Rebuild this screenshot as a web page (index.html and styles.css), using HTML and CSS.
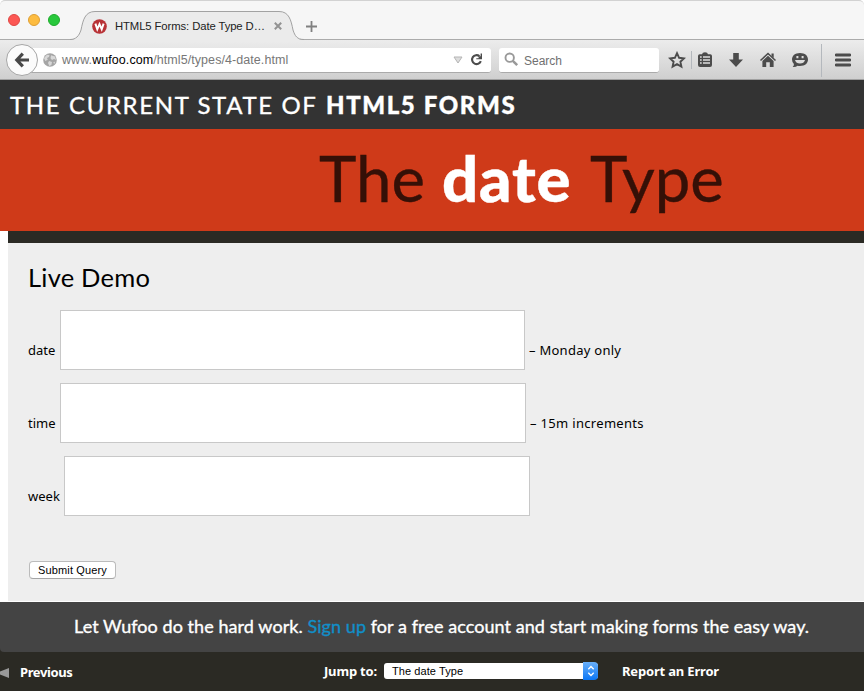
FILE: index.html
```html
<!DOCTYPE html>
<html lang="en">
<head>
<meta charset="utf-8">
<title>HTML5 Forms: Date Type Demo</title>
<link rel="stylesheet" href="styles.css">
</head>
<body>
<div class="window">
  <div class="tabbar">
    <div class="lights"><i class="red"></i><i class="amber"></i><i class="green"></i></div>
    <div class="tab">
      <svg class="tab-shape" width="232" height="30" viewBox="0 0 232 30">
        <path class="tab-fill" d="M0 29C6 29 9 25 11 19C13 9 15 .5 25 .5H209C219 .5 221 9 223 19C225 25 227 29 234 29V30H0Z"/>
        <path class="tab-line" d="M0 28.5C6 28.5 9 25 11 19C13 9 15 .5 25 .5H209C219 .5 221 9 223 19C225 25 227 28.5 234 28.5"/>
      </svg>
      <svg class="favicon" width="15" height="15" viewBox="0 0 15 15">
        <circle cx="7.5" cy="7.5" r="7.3" fill="#b83236"/>
        <path d="M3.4 4.6L5.3 10.2L7.5 5.2L9.7 10.2L11.6 4.6" fill="none" stroke="#fff" stroke-width="2"/>
      </svg>
      <span class="tab-title">HTML5 Forms: Date Type D…</span>
      <svg class="tab-close" width="8" height="8" viewBox="0 0 8 8"><path d="M.8.8L7.2 7.2M7.2.8L.8 7.2" stroke="#929292" stroke-width="2"/></svg>
    </div>
    <svg class="newtab" width="11" height="11" viewBox="0 0 11 11"><path d="M5.5 0V11M0 5.5H11" stroke="#808080" stroke-width="1.8"/></svg>
  </div>
  <div class="navbar">
    <div class="back">
      <svg width="16" height="16" viewBox="0 0 16 16"><path d="M8.8 1.6L2.8 8L8.8 14.4M3 8H15" fill="none" stroke="#484848" stroke-width="3.2"/></svg>
    </div>
    <div class="url">
      <svg class="globe" width="14" height="14" viewBox="0 0 14 14">
        <circle cx="7" cy="7" r="6.8" fill="#a5a5a5"/>
        <path d="M1 5L4 1.8L6.5 2L6 4L4 5L4.8 6.7L2.2 8ZM8 2.2L12 3.5L13 7L11 6L9 7L7.5 5.2ZM6 8L9 9L8.4 12L6.3 13L5 10ZM10.2 9.5L12.2 8.5L11.3 11Z" fill="#d8d8d8"/>
      </svg>
      <span class="address">www.<b>wufoo.com</b>/html5/types/4-date.html</span>
      <svg class="drop" width="10" height="8" viewBox="0 0 10 8"><path d="M1 1H9L5 7Z" fill="#ddd" stroke="#b5b5b5"/></svg>
      <svg class="reload" width="13" height="13" viewBox="0 0 13 13"><path d="M9.4 3.1A4.5 4.5 0 1 0 10.8 8.2" fill="none" stroke="#4c4c4c" stroke-width="2.1"/><path d="M12 .6V6.3H6.3V5.3H8.6V3.2H10.6V.6Z" fill="#4c4c4c"/></svg>
    </div>
    <div class="search">
      <svg width="15" height="15" viewBox="0 0 15 15"><circle cx="5.7" cy="5.7" r="4.2" fill="none" stroke="#999" stroke-width="1.9"/><path d="M8.8 8.8L13.2 13.2" stroke="#999" stroke-width="2.5"/></svg>
      <span>Search</span>
    </div>
    <div class="tools">
      <svg width="18" height="18" viewBox="0 0 18 18"><path d="M9 2.2L11.1 6.8L16 7.4L12.4 10.7L13.4 15.7L9 13.2L4.6 15.7L5.6 10.7L2 7.4L6.9 6.8Z" fill="none" stroke="#4c4c4c" stroke-width="1.9"/></svg>
      <i class="sep short"></i>
      <svg width="16" height="18" viewBox="0 0 16 18"><path d="M2.7 3.2H5Q5.4 1.2 8 1.2T11 3.2H13.3Q15 3.2 15 5V14Q15 16 13 16H3Q1 16 1 14V5Q1 3.2 2.7 3.2Z" fill="#4c4c4c"/><path d="M3 6H4.7M6 6H13M3 9H4.7M6 9H13M3 12H4.7M6 12H13" stroke="#ddd" stroke-width="1.7"/></svg>
      <svg class="gap-a" width="16" height="18" viewBox="0 0 16 18"><path d="M5.2 2H10.8V8.5H15L8 16L1 8.5H5.2Z" fill="#4c4c4c"/></svg>
      <svg class="gap-b" width="18" height="18" viewBox="0 0 18 18"><path d="M1.5 9.5L9 2.5L16.5 9.5" fill="none" stroke="#4c4c4c" stroke-width="1.6"/><path d="M12.5 2.5H14.7V7L12.5 5ZM3.4 10L9 4.8L14.6 10V16H10.8V11.3H7.2V16H3.4Z" fill="#4c4c4c"/></svg>
      <svg class="gap-c" width="18" height="18" viewBox="0 0 18 18"><path d="M9 2C14 2 17 4.8 17 8.5S14 15 9 15Q7.6 15 6.5 14.7Q4.8 16.4 1.7 16Q3.2 14.6 2.9 13Q1 11.2 1 8.5C1 4.8 4 2 9 2Z" fill="#4c4c4c"/><path d="M4 9H14Q13 12.6 9 12.6T4 9Z" fill="#ddd"/><path d="M6.4 5V7.3M11.6 5V7.3" stroke="#ddd" stroke-width="2"/></svg>
      <i class="sep tall"></i>
      <svg width="16" height="14" viewBox="0 0 16 14"><path d="M1 2H15M1 7H15M1 12H15" stroke="#4c4c4c" stroke-width="2.8" stroke-linecap="round"/></svg>
    </div>
  </div>

  <header class="masthead"><span>The current state of</span> <strong>HTML5 Forms</strong></header>
  <div class="hero"><h1><span class="w1">The</span><strong>date</strong><span class="w3">Type</span></h1></div>

  <main class="demo">
    <h2>Live Demo</h2>
    <div class="row"><label class="l-date">date</label><input class="short-in"><span class="note">– Monday only</span></div>
    <div class="row"><label class="l-time">time</label><input><span class="note n-time">– 15m increments</span></div>
    <div class="row"><label class="l-week">week</label><input></div>
    <button class="submit">Submit Query</button>
  </main>

  <div class="promo"><span>Let Wufoo do the hard work. <a>Sign up</a> for a free account and start making forms the easy way.</span></div>
  <footer class="footer">
    <i class="prev-arrow"></i>
    <span class="previous">Previous</span>
    <span class="jump">Jump to:</span>
    <div class="select"><span>The date Type</span>
      <i><svg width="8" height="12" viewBox="0 0 8 12"><path d="M1.3 4.2L4 1.5L6.7 4.2M1.3 7.8L4 10.5L6.7 7.8" fill="none" stroke="#fff" stroke-width="1.4"/></svg></i>
    </div>
    <span class="report">Report an Error</span>
  </footer>
</div>
</body>
</html>
```
FILE: styles.css
```css
* { box-sizing: border-box; }
body { margin: 0; background: #fff; font-family: "Noto Sans", sans-serif; }
.window { width: 864px; height: 691px; overflow: hidden; display: flex; flex-direction: column; }
.window > * { flex: none; }
svg { display: block; flex: none; }

.tabbar { height: 40px; display: flex; background: #f6f6f6; border-top: 1px solid #d2d2d2; border-bottom: 1px solid #ababab; border-radius: 5px 5px 0 0; }
.lights { display: flex; gap: 8px; padding: 13px 0 0 8px; width: 70px; }
.lights i { width: 12px; height: 12px; border-radius: 50%; }
.red { background: #fc5753; border: 1px solid #df4744; }
.amber { background: #fdbc40; border: 1px solid #de9f34; }
.green { background: #28c83c; border: 1px solid #1fab2c; }
.tab { position: relative; width: 232px; height: 39px; padding: 11px 0 0 22px; display: flex; align-items: center; font: 11.3px "Liberation Sans", sans-serif; color: #222; }
.tab-shape { position: absolute; left: 0; bottom: -1px; overflow: visible; }
.tab-fill { fill: #ebebeb; }
.tab-line { fill: none; stroke: #a2a2a2; }
.favicon, .tab-title, .tab-close { position: relative; }
.tab-title { margin-left: 8px; width: 151px; white-space: nowrap; letter-spacing: -.1px; }
.tab-close { margin-left: 8px; }
.newtab { margin: 20px 0 0 4px; position: relative; }

.navbar { height: 40px; display: flex; align-items: center; background: linear-gradient(#ececec, #cfcfcf); border-bottom: 1px solid #a0a0a0; font-family: "Liberation Sans", sans-serif; }
.back { position: relative; z-index: 1; width: 32px; height: 32px; margin-left: 6px; border: 1px solid #a6a6a6; border-radius: 50%; background: #fbfbfb; display: flex; align-items: center; justify-content: center; }
.url { width: 463px; height: 25px; margin: 1px 0 0 -10px; padding-left: 15px; background: #fff; border-bottom: 1px solid #aaa; border-radius: 0 3px 3px 0; display: flex; align-items: center; }
.address { margin-left: 5px; padding-top: 1px; width: 391px; font-size: 12.5px; letter-spacing: .07px; color: #777; white-space: nowrap; }
.address b { font-weight: normal; color: #000; }
.reload { margin-left: 7px; }
.search { width: 160px; height: 25px; margin: 1px 0 0 8px; padding-left: 5px; background: #fff; border-bottom: 1px solid #aaa; border-radius: 3px; display: flex; align-items: center; gap: 5px; font-size: 12px; color: #707070; }
.search span { padding-top: 2px; }
.tools { display: flex; align-items: center; padding: 1px 0 0 9px; }
.sep { width: 1px; background: #b4b8bd; }
.short { height: 18px; margin: 0 5px; }
.tall { height: 33px; margin: 0 13px 0 12px; }
.gap-a { margin-left: 15px; }
.gap-b { margin-left: 15px; }
.gap-c { margin-left: 14px; }

.masthead { height: 49px; padding: 0 0 1px 10px; display: flex; align-items: center; gap: 8.5px; background: #333; color: #fff; font: 24px Lato, sans-serif; letter-spacing: 1.62px; text-transform: uppercase; white-space: nowrap; -webkit-text-stroke: .35px #fff; }
.masthead strong { font-weight: 900; }
.hero { height: 102px; background: #cf3a19; }
.hero h1 { margin: 0; padding: 11px 0 0 319px; display: flex; font: 63.5px/76px Lato, sans-serif; color: #351007; -webkit-text-stroke: .4px; }
.w1 { width: 123px; }
.hero strong { width: 148px; font-weight: 900; color: #fff; letter-spacing: .8px; }

.demo { height: 370px; margin-left: 8px; padding: 18px 0 0 20px; border-top: 12px solid #2b2a24; background: #eee; display: flex; flex-direction: column; }
.demo h2 { margin: 0 0 17px; font: 25.5px/32px Lato, sans-serif; letter-spacing: .22px; color: #000; }
.row { display: flex; height: 60px; margin-bottom: 13px; font-size: 13px; line-height: 18px; color: #000; }
.row label, .note { margin-top: 31px; white-space: nowrap; }
.row input { width: 466px; height: 60px; padding: 0; border: 1px solid #c8c8c8; background: #fff; }
.row .short-in { width: 465px; }
.l-date, .l-time { width: 32px; }
.l-week { width: 36px; }
.row .note { margin-left: 4px; letter-spacing: .27px; }
.row .n-time { letter-spacing: .32px; }
.submit { width: 87px; height: 18px; margin: 32px 0 0 1px; padding: 0; border: 1px solid #bbb; border-bottom-color: #a5a5a5; border-radius: 4px; background: #fff; font: 11px "Liberation Sans", sans-serif; letter-spacing: .15px; color: #000; }

.promo { height: 50px; margin-top: 1px; padding-left: 74px; background: #444; box-shadow: 0 6px 0 #2b2a24; border-radius: 0 0 0 4px; color: #fff; font: 18px/49px Lato, sans-serif; letter-spacing: .065px; white-space: nowrap; -webkit-text-stroke: .35px; }
.promo a { color: #118fc8; }
.footer { height: 39px; display: flex; align-items: center; background: #2b2a24; color: #fff; font-size: 13px; font-weight: bold; letter-spacing: -.18px; white-space: nowrap; }
.prev-arrow { width: 9px; height: 10px; margin-top: 3px; background: #999; clip-path: polygon(0 35%, 100% 0, 100% 100%, 0 65%); }
.previous { width: 304px; margin-left: 11px; letter-spacing: -.4px; }
.jump { width: 60px; padding-bottom: 2px; }
.select { display: flex; width: 214px; height: 16px; margin-bottom: 2px; padding-left: 8px; border-radius: 3px; background: #fff; color: #000; font: 11px/16px "Liberation Sans", sans-serif; letter-spacing: .08px; align-items: center; justify-content: space-between; }
.select span { padding-top: 1px; }
.select i { width: 15px; height: 18px; display: flex; align-items: center; justify-content: center; border-radius: 0 4px 4px 0; background: linear-gradient(#69b0fa, #0b76f5); }
.report { margin-left: 24px; padding-bottom: 2px; }
```
